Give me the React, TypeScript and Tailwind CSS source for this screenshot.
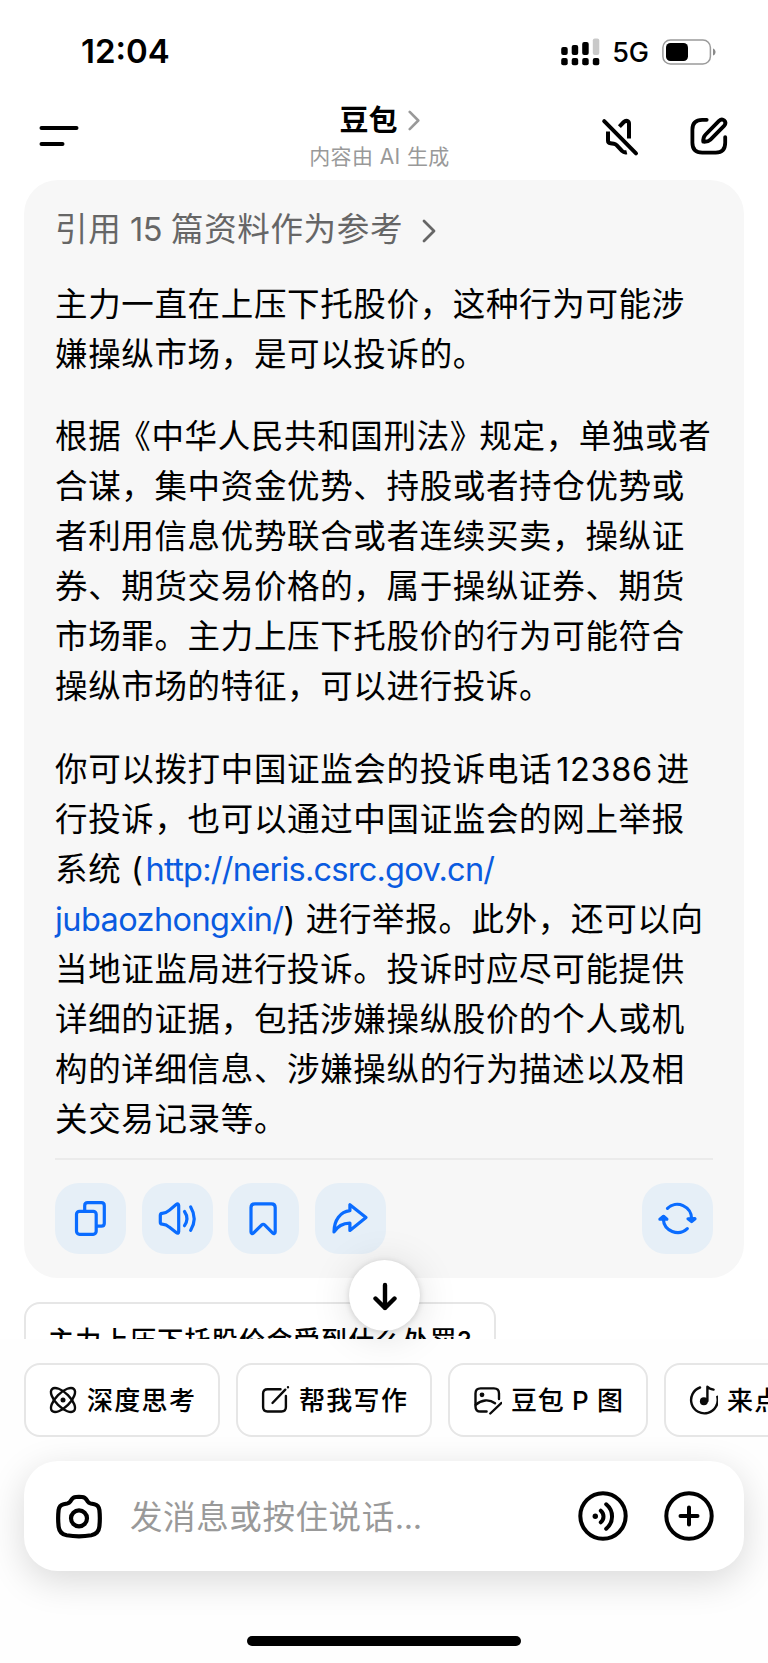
import React from 'react';
import { clsx } from 'clsx';

interface IconProps {
  className?: string;
}

interface ChipProps {
  icon: React.ReactNode;
  label: string;
  className?: string;
}

const SignalIcon = () => (
  <svg viewBox="0 0 39 28" className="w-[39px] h-7">
    <rect x="0.2" y="9" width="6.5" height="8" rx="2" />
    <rect x="10.7" y="7" width="6.5" height="10" rx="2" />
    <rect x="21.2" y="4" width="6.5" height="13" rx="2" />
    <rect x="31.8" y="0.5" width="6.5" height="16.5" rx="2" fill="#c9c9c9" />
    <rect x="0.2" y="20" width="6.5" height="7.3" rx="2" />
    <rect x="10.7" y="20" width="6.5" height="7.3" rx="2" />
    <rect x="21.2" y="20" width="6.5" height="7.3" rx="2" />
    <rect x="31.8" y="20" width="6.5" height="7.3" rx="2" />
  </svg>
);

const BatteryIcon = () => (
  <svg viewBox="0 0 54 26" className="w-[54px] h-[26px]">
    <rect x="0.9" y="1" width="47.5" height="24" rx="7.5" fill="none" stroke="#9b9b9b" strokeWidth="1.5" />
    <rect x="4" y="4" width="22" height="18" rx="4.5" />
    <path d="M51 9.5c3.4 1 3.4 6 0 7z" fill="#8a8a8a" />
  </svg>
);

const MenuIcon = () => (
  <svg viewBox="0 0 40 22" className="w-10 h-[22px]" stroke="#000" strokeWidth="4" strokeLinecap="round">
    <path d="M2.5 3h35M2.5 19h21" />
  </svg>
);

const MuteIcon = () => (
  <svg viewBox="0 0 48 48" className="w-12 h-12" fill="none" stroke="#000" strokeWidth="4" strokeLinecap="round" strokeLinejoin="round">
    <path d="M8.2 9.2 40 41.3" />
    <path d="m23.4 14.6 4.4-4.6c2.2-2 5.2-1.2 5.2 1.8v14.6" strokeLinecap="butt" />
    <path d="M12 19.5v9c0 1.8.8 2.6 2.4 2.8l3.4.4c1.2.2 2 .6 2.8 1.4l5.4 5.7c1.4 1.4 3.2 1.8 4.8 1.4" strokeLinecap="butt" />
  </svg>
);

const ComposeIcon = () => (
  <svg viewBox="0 0 48 48" className="w-12 h-12" fill="none" stroke="#000" strokeWidth="3.8" strokeLinecap="round" strokeLinejoin="round">
    <path d="M22.7 7.8h-4.5C11.5 7.8 8.4 11 8.4 17.5v13.3c0 6.7 3.100 9.800 9.800 9.800h13.600c6.600 0 9.400-3.100 9.400-9.800v-5.700" />
    <path d="M19.300 29.700c-.3-2.700.2-5 2.100-7L35 8.800c3.700-3.400 8.400.9 5.300 4.900L26.500 27.600c-1.900 1.900-4.400 2.300-7.200 2.100z" />
  </svg>
);

const Chevron = ({ className }: IconProps) => (
  <svg viewBox="0 0 14 24" className={className} fill="none" stroke="currentColor" strokeLinecap="round" strokeLinejoin="round">
    <path d="m2 2 10 10L2 22" />
  </svg>
);

const CopyIcon = () => (
  <>
    <rect x="21.500" y="28.300" width="19.700" height="23" rx="3" />
    <path d="M29.700 27.500v-4.800c0-2 1-3 3-3h13.600c2 0 3 1 3 3v17.500c0 2-1 3-3 3h-4.200" />
  </>
);

const SpeakerIcon = () => (
  <>
    <path d="M18.300 32.500v6.700c0 1.400.7 1.900 1.900 2 3 .3 5 1.100 7 2.900l7 5.500c1.500 1.200 2.500.7 2.500-1V22.600c0-1.800-1.100-2.200-2.500-1.100l-7 5.900c-2 1.800-4 2.700-7 3-1.200.1-1.900.6-1.900 2.100z" />
    <path d="M42.500 28.500c3 4.400 3 9.800 0 14.200M48.700 24c4.400 7.400 4.400 15.900 0 23.300" />
  </>
);

const BookmarkIcon = () => (
  <path d="M23 47.500v-23c0-2.600 1.200-3.700 3.800-3.700h16.600c2.600 0 3.800 1.100 3.800 3.700v24.600c0 1.500-1.300 2-2.400 1l-8.200-8.200c-.9-.9-1.900-.9-2.800 0l-8.400 8.200c-1.100 1-2.400.5-2.400-1z" />
);

const ShareIcon = () => (
  <path d="M34.900 21.800v5.900c-9.400 1-15.900 9.500-15.900 21.300 3.400-5.700 8.400-8.700 15.900-8.900v7.400L51 34.600z" />
);

const RefreshIcon = () => (
  <>
    <path d="M25.500 25.300a14.300 14.300 0 0 1 24.100 10.500M45.300 45.700A14.300 14.300 0 0 1 21.300 36" />
    <path d="m46 35.800 3.600 2.800 3.400-2.900zM17.900 36.200l3.600-2.900 3.400 2.900z" fill="currentColor" />
  </>
);

const CameraIcon = () => (
  <svg viewBox="0 0 48 50" className="w-12 h-[50px]" fill="none" stroke="#000" strokeWidth="4.200">
    <path d="M16.500 8.700c1.100-1.800 2.300-2.500 4.500-2.700a30 30 0 0 1 6 0c2.200.2 3.400.9 4.500 2.700l1.300 1.900c.8 1.200 1.700 1.600 3 1.900l3.600.7c3.200.7 4.600 2.700 5 5.900.6 5.700.6 11.300-.1 17-.6 4.900-3.200 7.300-8 8.200-8 1.300-16.600 1.300-24.600 0-4.800-.9-7.300-3.300-8-8.200a71 71 0 0 1-.1-17c.4-3.200 1.800-5.200 5-5.900l3.600-.7c1.300-.3 2.200-.7 3-1.900z" />
    <circle cx="24" cy="27.300" r="8" />
  </svg>
);

const VoiceIcon = () => (
  <svg viewBox="0 0 50 50" className="w-[50px] h-[50px]" fill="none" stroke="#000" strokeWidth="4" strokeLinecap="round">
    <circle cx="25" cy="25" r="22.700" />
    <circle cx="17.300" cy="25.300" r="2.700" fill="#000" stroke="none" />
    <path d="M22.800 19.700c3.600 3 3.600 8.600 0 11.600M28.200 13.300c7.800 6.500 7.800 17.900 0 24.400" />
  </svg>
);

const PlusIcon = () => (
  <svg viewBox="0 0 50 50" className="w-[50px] h-[50px]" fill="none" stroke="#000" strokeWidth="4" strokeLinecap="round">
    <circle cx="25" cy="25" r="22.700" />
    <path d="M16.500 25h17M25 16.500v17" />
  </svg>
);

const ChipSvg = ({ children }: { children: React.ReactNode }) => (
  <svg viewBox="0 0 30 30" className="w-[30px] h-[30px] shrink-0" fill="none" stroke="#0a0a0a" strokeWidth="2.400" strokeLinecap="round" strokeLinejoin="round">
    {children}
  </svg>
);

const AtomIcon = () => (
  <ChipSvg>
    <ellipse cx="15" cy="15" rx="15.500" ry="7" transform="rotate(45 15 15)" />
    <ellipse cx="15" cy="15" rx="15.500" ry="7" transform="rotate(-45 15 15)" />
    <circle cx="15" cy="15" r="2.500" fill="#0a0a0a" stroke="none" />
  </ChipSvg>
);

const WriteIcon = () => (
  <ChipSvg>
    <path d="M20.500 4.200H7.500c-3 0-4.400 1.400-4.400 4.400V22c0 3 1.400 4.500 4.400 4.500h14c3 0 4.400-1.500 4.400-4.500V11" />
    <path d="M12.500 18 25.300 4.700M28 2.200v.1" />
  </ChipSvg>
);

const PictureIcon = () => (
  <ChipSvg>
    <path d="M27 14V8.500c0-3.400-1.700-5.100-5.100-5.100H8.600c-3.400 0-5.100 1.700-5.100 5.100v12.900c0 3.400 1.700 5.100 5.100 5.100h6" />
    <path d="M3.700 19.800c5.600-5 13.300-6 19.300-1.600M18.300 28.500l11-10.500" />
    <circle cx="10" cy="9.800" r="2.400" fill="#0a0a0a" stroke="none" />
  </ChipSvg>
);

const MusicIcon = () => (
  <ChipSvg>
    <path d="M12 2.500a13.300 13.300 0 1 0 17.300 9.300" />
    <path d="M19.400 16V1.800c1.200 1.700 3.300 2.400 6.200 2.800" />
    <circle cx="15.900" cy="16.200" r="4" fill="#0a0a0a" stroke="none" />
  </ChipSvg>
);

const ActionButton = ({ children, className }: { children: React.ReactNode; className?: string }) => (
  <button className={clsx('w-[71px] h-[71px] rounded-[24px] bg-[#e6eff7] text-[#0a6cff]', className)}>
    <svg viewBox="0 0 71 71" className="w-full h-full" fill="none" stroke="currentColor" strokeWidth="3.200" strokeLinecap="round" strokeLinejoin="round">
      {children}
    </svg>
  </button>
);

const Chip = ({ icon, label, className }: ChipProps) => (
  <button className={clsx('flex h-[74px] shrink-0 items-center gap-[9px] rounded-2xl border-2 border-[#e6e6e6] bg-white/60 pl-[22px] text-[26px] font-medium whitespace-nowrap', className)}>
    {icon}
    <span>{label}</span>
  </button>
);

// Each string is one rendered line
const intro = ['主力一直在上压下托股价，这种行为可能涉', '嫌操纵市场，是可以投诉的。'];

const law = [
  '合谋，集中资金优势、持股或者持仓优势或',
  '者利用信息优势联合或者连续买卖，操纵证',
  '券、期货交易价格的，属于操纵证券、期货',
  '市场罪。主力上压下托股价的行为可能符合',
  '操纵市场的特征，可以进行投诉。',
];

const closing = [
  '当地证监局进行投诉。投诉时应尽可能提供',
  '详细的证据，包括涉嫌操纵股价的个人或机',
  '构的详细信息、涉嫌操纵的行为描述以及相',
  '关交易记录等。',
];

const Lines = ({ lines }: { lines: string[] }) => (
  <>
    {lines.map((line) => (
      <span key={line} className="block">{line}</span>
    ))}
  </>
);

export default function App() {
  return (
    <div className="flex h-[1663px] w-[768px] flex-col overflow-hidden bg-white text-black font-['Inter','Noto_Sans_CJK_SC',sans-serif]">
      {/* Status bar */}
      <div className="flex h-[98px] shrink-0 items-center pt-[5px] pl-[81px] pr-[52px]">
        <span className="flex-1 pt-px text-[33px] font-semibold">12:04</span>
        <SignalIcon />
        <span className="ml-3 mr-[13px] pt-[3px] text-[27px] font-medium">5G</span>
        <BatteryIcon />
      </div>

      {/* Header */}
      <header className="grid h-[82px] shrink-0 grid-cols-[1fr_auto_1fr] items-start pl-[39px] pr-9">
        <div className="pt-[27px]"><MenuIcon /></div>
        <div className="mr-3 flex flex-col items-center">
          <div className="flex h-[45px] items-center gap-[10px]">
            <h1 className="text-[29px] font-bold leading-[45px]">豆包</h1>
            <Chevron className="w-3 h-[21px] text-[#999] stroke-[3]" />
          </div>
          <p className="text-[21px] leading-[28px] tracking-[0.400px] text-[#999]">内容由 AI 生成</p>
        </div>
        <div className="flex justify-end gap-10 pt-[14px]">
          <MuteIcon />
          <ComposeIcon />
        </div>
      </header>

      {/* Conversation */}
      <main className="h-[1159px] shrink-0 overflow-hidden px-6">
        <article className="h-[1098px] rounded-[34px] bg-[#f7f7f7] px-[31px]">
          <div className="flex h-[99px] items-center gap-[19px] pt-[2px] text-[#666]">
            <span className="text-[32.500px] tracking-[0.650px]">
              引用<span className="tracking-[-0.400px]"> 15 </span>篇资料作为参考
            </span>
            <Chevron className="w-[14px] h-6 stroke-[2.800]" />
          </div>
          <div className="h-[881px] space-y-8 border-b-2 border-[#ebebeb] pt-[0.500px] text-[32.500px] leading-[50.130px] tracking-[0.650px] whitespace-nowrap">
            <p><Lines lines={intro} /></p>
            <p>
              <span className="block">
                根据<span className="-ml-[3px]">《</span>中华人民共和国刑法<span className="tracking-[-3px]">》</span>规定，单独或者
              </span>
              <Lines lines={law} />
            </p>
            <p>
              <span className="block">你可以拨打中国证监会的投诉电话<span className="mx-1 tracking-[0.600px]">12386</span>进</span>
              <span className="block">行投诉，也可以通过中国证监会的网上举报</span>
              <span className="block">
                系统 (<a className="ml-0.5 tracking-[-0.750px] text-[#0a5be0]">http://neris.csrc.gov.cn/</a>
              </span>
              <span className="block">
                <a className="tracking-[-0.600px] text-[#0a5be0]">jubaozhongxin/</a>) 进行举报。此外，还可以向
              </span>
              <Lines lines={closing} />
            </p>
          </div>
          <div className="flex gap-[15.700px] pt-[23px]">
            <ActionButton><CopyIcon /></ActionButton>
            <ActionButton><SpeakerIcon /></ActionButton>
            <ActionButton><BookmarkIcon /></ActionButton>
            <ActionButton><ShareIcon /></ActionButton>
            <ActionButton className="ml-auto"><RefreshIcon /></ActionButton>
          </div>
        </article>
        <button className="mt-6 block h-[74px] w-[472px] rounded-2xl border-2 border-[#e6e6e6] pt-[2px] pl-[22px] text-left text-[26px] font-medium tracking-[1.300px] whitespace-nowrap">
          主力上压下托股价会受到什么处罚?
        </button>
      </main>

      {/* Bottom panel */}
      <footer className="relative flex h-[324px] shrink-0 flex-col bg-[#fdfdfd]/60 pt-6">
        <button className="absolute -top-[79px] left-[349px] flex h-[71px] w-[71px] items-center justify-center rounded-full bg-white shadow-[0_4px_40px_rgba(0,0,0,0.13),0_1px_6px_rgba(0,0,0,0.15)]">
          <svg viewBox="0 0 28 30" className="w-7 h-[30px]" fill="none" stroke="#000" strokeWidth="4.400" strokeLinecap="round" strokeLinejoin="round">
            <path d="M14 4v23M4.500 17.500 14 27l9.500-9.500" />
          </svg>
        </button>
        <div className="flex gap-4 pl-6">
          <Chip icon={<AtomIcon />} label="深度思考" className="w-[196px] tracking-[1.300px]" />
          <Chip icon={<WriteIcon />} label="帮我写作" className="w-[196px] tracking-[1.300px]" />
          <Chip icon={<PictureIcon />} label="豆包 P 图" className="w-[200px] tracking-[0.700px]" />
          <Chip icon={<MusicIcon />} label="来点音乐" className="w-[196px] tracking-[1.300px]" />
        </div>
        <div className="mx-6 mt-6 flex h-[110px] items-center rounded-[34px] bg-white pl-[31px] pr-[30px] shadow-[0_10px_36px_rgba(0,0,0,0.15)]">
          <CameraIcon />
          <span className="ml-[27px] flex-1 pt-[5px] text-[32.500px] tracking-[0.600px] text-[#999]">
            发消息或按住说话<span className="tracking-[-0.400px]">...</span>
          </span>
          <VoiceIcon />
          <span className="w-9" />
          <PlusIcon />
        </div>
        <div className="mx-auto mt-[65px] h-[10px] w-[274px] rounded-full bg-black" />
      </footer>
    </div>
  );
}
